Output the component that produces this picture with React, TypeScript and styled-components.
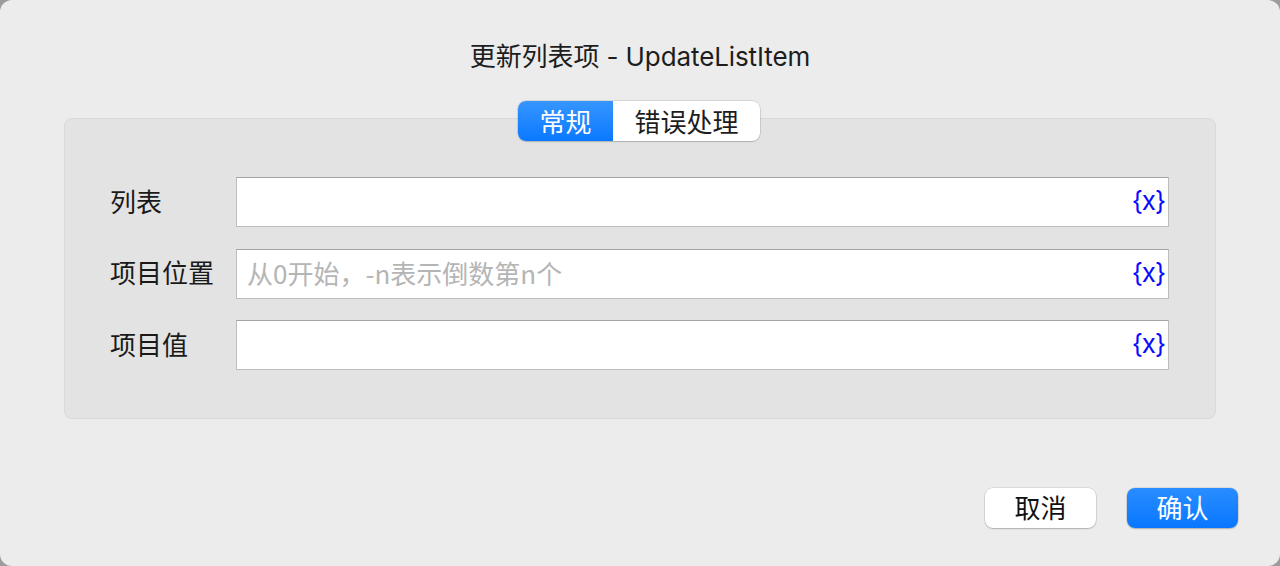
import React from "react";
import styled, { createGlobalStyle } from "styled-components";

const Global = createGlobalStyle`
  html, body { margin: 0; padding: 0; background: #9c9c9c; }
  body { font-family: "Inter", "Noto Sans CJK SC", sans-serif; }
  * { box-sizing: border-box; }
`;

const Window = styled.div`
  width: 1280px;
  height: 566px;
  background: #ececec;
  border-radius: 12px;
  display: flex;
  flex-direction: column;
  padding: 37px 0 0;
  overflow: hidden;
`;

const Title = styled.div`
  height: 40px;
  line-height: 40px;
  text-align: center;
  font-size: 26px;
  letter-spacing: -0.1px;
  color: #1d1d1d;
`;

const Body = styled.div`
  padding: 24px 64px 0;
  display: flex;
  flex-direction: column;
`;

const TabsRow = styled.div`
  display: flex;
  justify-content: center;
  position: relative;
  z-index: 1;
  padding-right: 2px;
`;

const TabGroup = styled.div`
  display: flex;
  height: 40px;
  background: #fff;
  border-radius: 8px;
  box-shadow: 0 0 0 0.5px rgba(0, 0, 0, 0.18), 0 1px 1.5px rgba(0, 0, 0, 0.15);
`;

const Tab = styled.div<{ $active?: boolean }>`
  display: flex;
  align-items: center;
  padding: 0 21.5px 2px;
  font-size: 26px;
  font-family: "Noto Sans CJK SC", sans-serif;
  border-radius: 8px;
  color: ${(p) => (p.$active ? "#fff" : "#1d1d1d")};
  background: ${(p) =>
    p.$active ? "linear-gradient(#3796ff, #0a79ff)" : "transparent"};
  ${(p) => (p.$active ? "border-top-right-radius: 0; border-bottom-right-radius: 0;" : "")}
`;

const Panel = styled.div`
  margin-top: -23px;
  background: #e3e3e3;
  border: 1px solid #d9d9d9;
  border-radius: 8px;
  padding: 58px 46px 48px 45px;
  display: flex;
  flex-direction: column;
  gap: 21.5px;
`;

const Row = styled.div`
  display: flex;
  align-items: center;
  height: 50px;
`;

const Label = styled.div`
  width: 126px;
  flex: none;
  font-size: 26px;
  color: #1a1a1a;
  font-family: "Noto Sans CJK SC", sans-serif;
  padding-bottom: 4px;
`;

const Field = styled.div`
  flex: 1;
  height: 50px;
  background: #fff;
  border: 1px solid #bdbdbd;
  border-top-color: #a3a3a3;
  display: flex;
  align-items: center;
  padding: 0 1px 3px 10px;
`;

const Input = styled.input`
  flex: 1;
  border: none;
  outline: none;
  background: transparent;
  font-size: 26px;
  font-family: "Noto Sans CJK SC", sans-serif;
  color: #1a1a1a;
  padding: 0;
  &::placeholder { color: #b5b5b5; }
`;

const VarButton = styled.span`
  font-size: 26px;
  color: #0a0aff;
  font-family: "Inter", sans-serif;
  letter-spacing: -1px;
  padding-right: 2px;
`;

const Footer = styled.div`
  margin-top: 69px;
  display: flex;
  justify-content: flex-end;
  gap: 31px;
  padding-right: 42px;
`;

const Button = styled.button<{ $primary?: boolean }>`
  width: 111px;
  height: 40px;
  border: none;
  border-radius: 8px;
  font-size: 26px;
  font-family: "Noto Sans CJK SC", sans-serif;
  color: ${(p) => (p.$primary ? "#fff" : "#111")};
  background: ${(p) => (p.$primary ? "linear-gradient(#2a8dff, #0877ff)" : "#fff")};
  box-shadow: 0 0 0 0.5px rgba(0, 0, 0, 0.15), 0 1px 1.5px rgba(0, 0, 0, 0.2);
  padding: 0 0 4px;
  display: flex;
  align-items: center;
  justify-content: center;
`;

const fields = [
  { label: "列表", placeholder: "" },
  { label: "项目位置", placeholder: "从0开始，-n表示倒数第n个" },
  { label: "项目值", placeholder: "" },
];

export default function App() {
  return (
    <>
      <Global />
      <Window>
        <Title>更新列表项 - UpdateListItem</Title>
        <Body>
          <TabsRow>
            <TabGroup>
              <Tab $active>常规</Tab>
              <Tab>错误处理</Tab>
            </TabGroup>
          </TabsRow>
          <Panel>
            {fields.map((f) => (
              <Row key={f.label}>
                <Label>{f.label}</Label>
                <Field>
                  <Input placeholder={f.placeholder} />
                  <VarButton>{"{x}"}</VarButton>
                </Field>
              </Row>
            ))}
          </Panel>
        </Body>
        <Footer>
          <Button>取消</Button>
          <Button $primary>确认</Button>
        </Footer>
      </Window>
    </>
  );
}
